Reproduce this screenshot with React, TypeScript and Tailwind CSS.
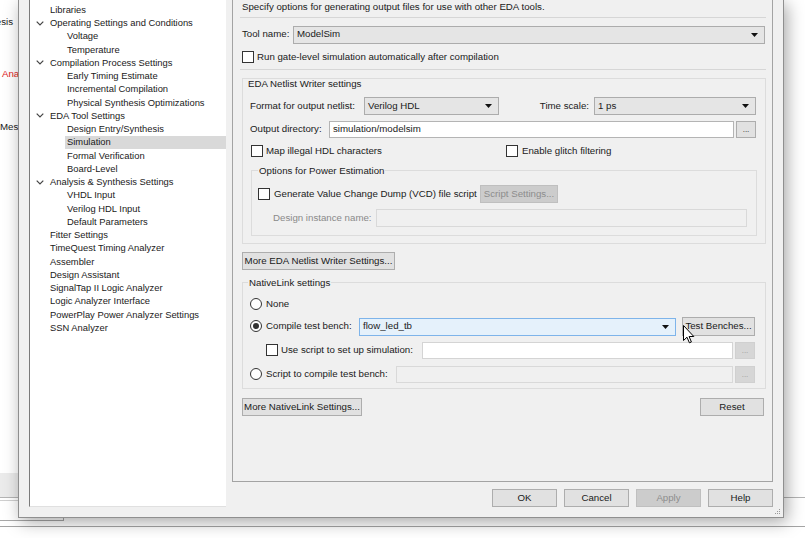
import React from 'react';

const tree = [
  { t: 'Files', l: 1 },
  { t: 'Libraries', l: 1 },
  { t: 'Operating Settings and Conditions', l: 1, exp: true },
  { t: 'Voltage', l: 2 },
  { t: 'Temperature', l: 2 },
  { t: 'Compilation Process Settings', l: 1, exp: true },
  { t: 'Early Timing Estimate', l: 2 },
  { t: 'Incremental Compilation', l: 2 },
  { t: 'Physical Synthesis Optimizations', l: 2 },
  { t: 'EDA Tool Settings', l: 1, exp: true },
  { t: 'Design Entry/Synthesis', l: 2 },
  { t: 'Simulation', l: 2, sel: true },
  { t: 'Formal Verification', l: 2 },
  { t: 'Board-Level', l: 2 },
  { t: 'Analysis & Synthesis Settings', l: 1, exp: true },
  { t: 'VHDL Input', l: 2 },
  { t: 'Verilog HDL Input', l: 2 },
  { t: 'Default Parameters', l: 2 },
  { t: 'Fitter Settings', l: 1 },
  { t: 'TimeQuest Timing Analyzer', l: 1 },
  { t: 'Assembler', l: 1 },
  { t: 'Design Assistant', l: 1 },
  { t: 'SignalTap II Logic Analyzer', l: 1 },
  { t: 'Logic Analyzer Interface', l: 1 },
  { t: 'PowerPlay Power Analyzer Settings', l: 1 },
  { t: 'SSN Analyzer', l: 1 },
];

const Arrow = () => (
  <svg width="7" height="4" viewBox="0 0 7 4" className="shrink-0">
    <polygon points="0,0 7,0 3.5,4" fill="#111" />
  </svg>
);

const Chevron = () => (
  <svg width="8" height="5" viewBox="0 0 8 5">
    <polyline points="0.7,0.7 4,4 7.3,0.7" fill="none" stroke="#444" strokeWidth="1.2" />
  </svg>
);

const Check = () => <span className="w-[12px] h-[12px] border border-[#333] bg-white shrink-0" />;

const Radio = ({ on }: { on?: boolean }) => (
  <span className="w-[12px] h-[12px] rounded-full border border-[#333] bg-white shrink-0 flex items-center justify-center">
    {on && <span className="w-[6px] h-[6px] rounded-full bg-[#333]" />}
  </span>
);

const Combo = ({ text, cls }: { text: string; cls: string }) => (
  <div className={`h-[18px] border border-[#acacac] bg-[#e5e5e5] flex items-center pl-[3px] pr-[6px] ${cls}`}>
    <span className="flex-1">{text}</span>
    <Arrow />
  </div>
);

const Btn = ({ text, cls, off }: { text: string; cls: string; off?: boolean }) => (
  <div
    className={`h-[18px] border flex items-center justify-center shrink-0 ${
      off ? 'border-[#bfbfbf] bg-[#cccccc] text-[#8d8d8d]' : 'border-[#adadad] bg-[#e1e1e1]'
    } ${cls}`}
  >
    {text}
  </div>
);

const Dots = ({ off }: { off?: boolean }) => (
  <div
    className={`w-[20px] h-[17px] border flex items-center justify-center shrink-0 ml-[2px] text-[8px] ${
      off ? 'border-[#d0d0d0] bg-[#d6d6d6] text-[#9a9a9a]' : 'border-[#adadad] bg-[#e1e1e1]'
    }`}
  >
    ...
  </div>
);

export default function App() {
  return (
    <div className="relative w-[805px] h-[538px] overflow-hidden bg-white text-[9.7px] text-[#1a1a1a] font-['Liberation_Sans',Arial,sans-serif]">
      {/* window behind the dialog */}
      <div className="absolute left-[-67px] w-[80px] top-[16px] leading-[12px] whitespace-nowrap text-right">Synthesis</div>
      <div className="absolute left-[2px] top-[68px] leading-[12px] text-[#e0201c] whitespace-nowrap">Analysis</div>
      <div className="absolute left-0 top-[121px] leading-[12px] whitespace-nowrap">Messages</div>
      <div className="absolute left-0 top-[473px] w-[18px] h-[24px] bg-[#ebebeb]" />
      <div className="absolute left-0 right-0 top-[497px] border-t border-[#b4b4b4]" />
      <div className="absolute left-0 w-[18px] top-[500px] border-t border-[#cfcfcf]" />
      <div className="absolute left-0 w-[64px] top-[520px] border-t border-[#a8a8a8]" />
      <div className="absolute left-[63px] top-[517px] h-[4px] border-l border-[#a8a8a8]" />
      <div className="absolute left-0 right-0 top-[526px] border-t border-[#a4a4a4]" />

      {/* dialog */}
      <div className="absolute left-[18px] top-0 w-[766px] h-[518px] bg-[#f0f0f0] border-x border-b border-[#8f8f8f] shadow-[3px_4px_16px_rgba(0,0,0,0.35)] flex px-[10px] pb-[10px]">
        {/* tree */}
        <div className="w-[197px] bg-white border-l border-[#7a7a7a] border-b border-b-[#e0e0e0] overflow-hidden shrink-0 text-[9.4px]">
          <div className="-mt-[10px]">
            {tree.map((it) => (
              <div key={it.t} className="h-[13.25px] flex items-center whitespace-nowrap">
                {it.l === 1 ? (
                  <>
                    <div className="w-[20px] pl-[6px] flex items-center">{it.exp && <Chevron />}</div>
                    <span>{it.t}</span>
                  </>
                ) : (
                  <>
                    <div className="w-[35px]" />
                    <span className={`flex-1 h-full flex items-center pl-[2px] ${it.sel ? 'bg-[#d9d9d9]' : ''}`}>{it.t}</span>
                  </>
                )}
              </div>
            ))}
          </div>
        </div>

        {/* right side */}
        <div className="flex-1 ml-[6px] flex flex-col">
          <div className="flex-1 border-x border-b border-[#a3a3a3] pl-[9px] pr-[6px] flex flex-col">
            <div className="h-[14px] leading-[14px]">Specify options for generating output files for use with other EDA tools.</div>
            <div className="mt-[3px] -ml-[2px] border-t border-[#d6d6d6]" />
            <div className="mt-[8px] h-[17px] flex items-center">
              <span className="w-[51px]">Tool name:</span>
              <Combo text="ModelSim" cls="flex-1 h-[17px] mr-[1px]" />
            </div>
            <div className="mt-[8px] h-[12px] flex items-center">
              <Check />
              <span className="ml-[3px]">Run gate-level simulation automatically after compilation</span>
            </div>
            <div className="mt-[6px] -ml-[2px] border-t border-[#d6d6d6]" />

            {/* EDA Netlist Writer settings */}
            <div className="mt-[8px] border border-[#dcdcdc] pl-[7px] pr-[9px] pb-[7px] flex flex-col">
              <div className="h-[10px] leading-[10px] -ml-[2px]">EDA Netlist Writer settings</div>
              <div className="mt-[8px] h-[18px] flex items-center">
                <span className="w-[114px]">Format for output netlist:</span>
                <Combo text="Verilog HDL" cls="w-[135px]" />
                <span className="flex-1 text-right pr-[5px]">Time scale:</span>
                <Combo text="1 ps" cls="w-[162px]" />
              </div>
              <div className="mt-[6px] h-[17px] flex items-center">
                <span className="w-[79px]">Output directory:</span>
                <div className="flex-1 h-[17px] border border-[#b4b4b4] bg-white flex items-center pl-[3px]">simulation/modelsim</div>
                <Dots />
              </div>
              <div className="mt-[7px] h-[12px] flex items-center">
                <div className="w-[256px] pl-[1px] flex items-center">
                  <Check />
                  <span className="ml-[3px]">Map illegal HDL characters</span>
                </div>
                <Check />
                <span className="ml-[4px]">Enable glitch filtering</span>
              </div>

              {/* Options for Power Estimation */}
              <div className="relative mt-[13px] ml-[1px] -mr-[1px] border border-[#dcdcdc] pl-[6px] pr-[9px] pb-[8px] flex flex-col">
                <span className="absolute left-[6px] -top-[6px] leading-[11px] px-[1px] bg-[#f0f0f0]">Options for Power Estimation</span>
                <div className="mt-[14px] h-[18px] flex items-center">
                  <div className="w-[222px] flex items-center">
                    <Check />
                    <span className="ml-[4px]">Generate Value Change Dump (VCD) file script</span>
                  </div>
                  <Btn text="Script Settings..." cls="w-[78px]" off />
                </div>
                <div className="mt-[6px] h-[18px] flex items-center">
                  <span className="w-[118px] pl-[15px] text-[#8a8a8a]">Design instance name:</span>
                  <div className="flex-1 h-[18px] border border-[#d9d9d9] bg-[#f0f0f0]" />
                </div>
              </div>
            </div>

            <Btn text="More EDA Netlist Writer Settings..." cls="mt-[8px] w-[153px]" />

            {/* NativeLink settings */}
            <div className="relative mt-[12px] border border-[#dcdcdc] pl-[7px] pr-[10px] pb-[5px] flex flex-col">
              <span className="absolute left-[5px] -top-[6px] leading-[11px] px-[1px] bg-[#f0f0f0]">NativeLink settings</span>
              <div className="mt-[15px] h-[12px] flex items-center">
                <Radio />
                <span className="ml-[4px]">None</span>
              </div>
              <div className="mt-[7px] h-[19px] flex items-center">
                <div className="w-[109px] flex items-center">
                  <Radio on />
                  <span className="ml-[4px]">Compile test bench:</span>
                </div>
                <div className="w-[317px] h-[18px] border border-[#7eb4ea] bg-[#e5f1fb] flex items-center pl-[3px] pr-[6px]">
                  <span className="flex-1">flow_led_tb</span>
                  <Arrow />
                </div>
                <Btn text="Test Benches..." cls="ml-[6px] flex-1 h-[19px]" />
              </div>
              <div className="mt-[6px] h-[17px] flex items-center">
                <div className="w-[172px] pl-[16px] flex items-center">
                  <Check />
                  <span className="ml-[3px]">Use script to set up simulation:</span>
                </div>
                <div className="flex-1 h-[17px] border border-[#d4d4d4] bg-white" />
                <Dots off />
              </div>
              <div className="mt-[7px] h-[17px] flex items-center">
                <div className="w-[146px] flex items-center">
                  <Radio />
                  <span className="ml-[4px]">Script to compile test bench:</span>
                </div>
                <div className="flex-1 h-[17px] border border-[#d9d9d9] bg-[#f0f0f0]" />
                <Dots off />
              </div>
            </div>

            <div className="mt-[9px] flex items-center">
              <Btn text="More NativeLink Settings..." cls="w-[120px]" />
              <div className="flex-1" />
              <Btn text="Reset" cls="w-[64px] mr-[2px]" />
            </div>
          </div>

          <div className="mt-[7px] h-[18px] flex justify-end gap-[7px]">
            <Btn text="OK" cls="w-[65px]" />
            <Btn text="Cancel" cls="w-[65px]" />
            <Btn text="Apply" cls="w-[65px]" off />
            <Btn text="Help" cls="w-[65px]" />
          </div>
        </div>

        {/* size grip */}
        <svg width="7" height="7" viewBox="0 0 7 7" className="absolute right-[2px] bottom-[2px]">
          <rect x="5" y="1" width="1" height="1" fill="#999" />
          <rect x="3" y="3" width="1" height="1" fill="#999" />
          <rect x="5" y="3" width="1" height="1" fill="#999" />
          <rect x="1" y="5" width="1" height="1" fill="#999" />
          <rect x="3" y="5" width="1" height="1" fill="#999" />
          <rect x="5" y="5" width="1" height="1" fill="#999" />
        </svg>
      </div>

      {/* mouse pointer */}
      <svg width="12" height="19" viewBox="0 0 12 19" className="absolute left-[683px] top-[325px]">
        <path d="M0.5,0.5 L0.5,15.5 L4,12.2 L6.4,17.8 L8.4,17 L6.1,11.5 L10.8,11.5 Z" fill="#fff" stroke="#000" strokeWidth="1" strokeLinejoin="round" />
      </svg>
    </div>
  );
}
